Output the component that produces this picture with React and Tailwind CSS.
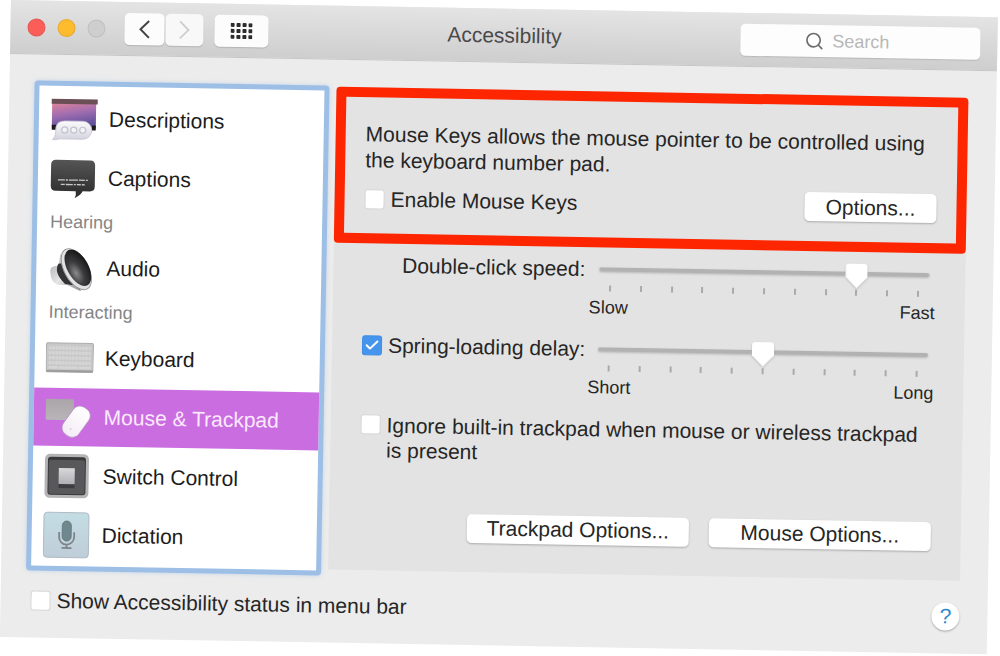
import React from "react";
import { Check, ChevronLeft, ChevronRight, Search } from "lucide-react";

function DescriptionsIcon() {
  return (
    <svg viewBox="0 0 48 48" className="size-12" aria-hidden="true">
      <defs>
        <linearGradient id="desc-sky" x1="0" y1="0" x2="0.3" y2="1">
          <stop offset="0" stopColor="#df8399" />
          <stop offset="0.5" stopColor="#a06db0" />
          <stop offset="1" stopColor="#5f519c" />
        </linearGradient>
        <linearGradient id="desc-bubble" x1="0" y1="0" x2="0" y2="1">
          <stop offset="0" stopColor="#fbfbfd" />
          <stop offset="1" stopColor="#d2d2de" />
        </linearGradient>
      </defs>
      <rect x="2" y="8" width="44" height="25" fill="url(#desc-sky)" />
      <rect x="1.500" y="4" width="46" height="5" fill="#6b4f57" />
      <path d="M2 30h5v5H2zM42 30h4v5h-4z" fill="#20181f" />
      <path
        d="M15 26h18a9 9 0 0 1 0 18H10q-3 1-7 1 3-3 3-8-1-11 9-11z"
        fill="url(#desc-bubble)"
        stroke="#c4c2d2"
        strokeWidth="0.800"
      />
      <g fill="#f2f2f7" stroke="#c3c2ce" strokeWidth="1.200">
        <circle cx="15" cy="35" r="3" />
        <circle cx="24" cy="35" r="3" />
        <circle cx="33" cy="35" r="3" />
      </g>
    </svg>
  );
}

function CaptionsIcon() {
  return (
    <svg viewBox="0 0 48 48" className="size-12" aria-hidden="true">
      <defs>
        <linearGradient id="cap-body" x1="0" y1="0" x2="0" y2="1">
          <stop offset="0" stopColor="#555555" />
          <stop offset="1" stopColor="#2a2a2a" />
        </linearGradient>
      </defs>
      <path
        d="M7 6h34q5 0 5 5v21q0 5-5 5h-7q-2 4-8 7 2-3 1-7H7q-5 0-5-5V11q0-5 5-5z"
        fill="url(#cap-body)"
      />
      <path d="M9 26h30" stroke="#c8c8c8" strokeWidth="1.300" strokeDasharray="7 1 2 1 9 1 6 1" />
      <path d="M12 30.500h24" stroke="#c8c8c8" strokeWidth="1.300" strokeDasharray="4 1 7 1 2 1" />
    </svg>
  );
}

function AudioIcon() {
  return (
    <svg viewBox="0 0 48 48" className="size-12" aria-hidden="true">
      <defs>
        <radialGradient id="audio-cone" cx="0.3" cy="0.6" r="0.7">
          <stop offset="0" stopColor="#8a8a8c" />
          <stop offset="0.45" stopColor="#3c3c3e" />
          <stop offset="1" stopColor="#171718" />
        </radialGradient>
        <linearGradient id="audio-metal" x1="0" y1="0" x2="1" y2="1">
          <stop offset="0" stopColor="#a5a5a8" />
          <stop offset="0.5" stopColor="#e6e6e8" />
          <stop offset="1" stopColor="#8a8a8d" />
        </linearGradient>
      </defs>
      <path d="M13 10 11 22q-8 0-8 5 0 12 8 14l9 0 14 6-8-22z" fill="url(#audio-metal)" />
      <path d="M11 20q-5 9 7 20l8 1-10-22z" fill="#333335" />
      <ellipse cx="29" cy="25" rx="12" ry="22.500" transform="rotate(-30 29 25)" fill="#e2e2e4" stroke="#929295" strokeWidth="0.900" />
      <ellipse cx="30.500" cy="23.500" rx="10.500" ry="20" transform="rotate(-30 30.500 23.500)" fill="url(#audio-cone)" />
    </svg>
  );
}

function KeyboardIcon() {
  return (
    <svg viewBox="0 0 48 48" className="size-12" aria-hidden="true">
      <rect x="0.500" y="9" width="47" height="29" rx="1.500" fill="#c8c8c8" stroke="#adadad" />
      <rect x="0.500" y="36" width="47" height="2" rx="1" fill="#9c9c9c" />
      <g stroke="#d5d5d5" strokeWidth="3.200">
        <path d="M3 14h42M3 19h42M3 24h42M3 29h42" strokeDasharray="2.800 0.500" />
        <path d="M3 33.500h9M13 33.500h19M33 33.500h12" strokeWidth="2.500" />
      </g>
    </svg>
  );
}

function MouseIcon() {
  return (
    <svg viewBox="0 0 48 48" className="size-12" aria-hidden="true">
      <defs>
        <linearGradient id="pad" x1="0" y1="0" x2="0" y2="1">
          <stop offset="0" stopColor="#a9a5a9" />
          <stop offset="1" stopColor="#b8b4b8" />
        </linearGradient>
        <linearGradient id="mouse-body" x1="0" y1="0" x2="0" y2="1">
          <stop offset="0" stopColor="#ffffff" />
          <stop offset="1" stopColor="#f4ebf6" />
        </linearGradient>
      </defs>
      <rect x="1" y="6" width="28" height="21" rx="1" fill="url(#pad)" />
      <rect x="22" y="12" width="19" height="33" rx="8" transform="rotate(35 31.500 28.500)" fill="url(#mouse-body)" stroke="#b88cc6" strokeWidth="0.800" />
      <circle cx="26" cy="36" r="0.900" fill="#d3c6d8" />
    </svg>
  );
}

function SwitchIcon() {
  return (
    <svg viewBox="0 0 48 48" className="size-12" aria-hidden="true">
      <defs>
        <linearGradient id="switch-key" x1="0" y1="0" x2="0" y2="1">
          <stop offset="0" stopColor="#d9d9dc" />
          <stop offset="1" stopColor="#b0b0b4" />
        </linearGradient>
      </defs>
      <rect x="1" y="2" width="44" height="44" rx="5" fill="#b5b5b5" />
      <rect x="4" y="5" width="38" height="38" rx="3" fill="#3a3a3c" />
      <rect x="5" y="8" width="36" height="34" rx="2" fill="#58585b" />
      <path d="M15 31h16v5H15z" fill="#3d3d40" />
      <rect x="15" y="16" width="16" height="16" fill="url(#switch-key)" />
    </svg>
  );
}

function DictationIcon() {
  return (
    <svg viewBox="0 0 48 48" className="size-12" aria-hidden="true">
      <defs>
        <linearGradient id="dict-bg" x1="0" y1="0" x2="0" y2="1">
          <stop offset="0" stopColor="#c4dde4" />
          <stop offset="1" stopColor="#bfcdd8" />
        </linearGradient>
      </defs>
      <rect x="1" y="1.500" width="45" height="45" rx="3.500" fill="url(#dict-bg)" stroke="#a9b6bf" strokeWidth="0.900" />
      <rect x="19.500" y="10" width="9" height="20" rx="4.500" fill="#6f888e" stroke="#5b7178" strokeWidth="0.800" />
      <path d="M16.500 21v5a7.500 7.500 0 0 0 15 0v-5M24 33.500v3M19 37h10" fill="none" stroke="#7d8489" strokeWidth="1.800" />
    </svg>
  );
}

function CheckBox({ defaultChecked, id }) {
  return (
    <span className="grid shrink-0 place-items-center">
      <input
        id={id}
        type="checkbox"
        defaultChecked={defaultChecked}
        className="peer col-start-1 row-start-1 size-5 appearance-none rounded-[3px] border border-[#d6d6d6] bg-white checked:border-[#3f8ee6] checked:bg-[#4595ec]"
      />
      <Check className="pointer-events-none col-start-1 row-start-1 hidden size-4 text-white peer-checked:block" strokeWidth={3} />
    </span>
  );
}

function PushButton({ children, className }) {
  return (
    <button
      type="button"
      className={"h-[29px] rounded-[5px] bg-white text-center leading-[28px] shadow-[0_1px_2px_rgba(0,0,0,0.25)] " + className}
    >
      {children}
    </button>
  );
}

function TickSlider({ id, value, from, to }) {
  return (
    <div className="min-w-0">
      <div className="flex h-7 items-center">
        <input
          id={id}
          type="range"
          min="0"
          max="10"
          defaultValue={value}
          className="h-7 w-full appearance-none bg-transparent drop-shadow-[0_1px_1px_rgba(0,0,0,0.2)] [&::-webkit-slider-runnable-track]:h-1 [&::-webkit-slider-runnable-track]:rounded-full [&::-webkit-slider-runnable-track]:bg-[#b2b2b2] [&::-webkit-slider-thumb]:-mt-2 [&::-webkit-slider-thumb]:h-[25px] [&::-webkit-slider-thumb]:w-[22px] [&::-webkit-slider-thumb]:appearance-none [&::-webkit-slider-thumb]:rounded-[3px] [&::-webkit-slider-thumb]:bg-white [&::-webkit-slider-thumb]:[clip-path:polygon(0_0,100%_0,100%_55%,50%_100%,0_55%)]"
        />
      </div>
      <div className="mt-0.5 flex justify-between px-[10px]" aria-hidden="true">
        {Array.from({ length: 11 }, (_, i) => (
          <span key={i} className="h-1.5 w-0.5 bg-[#aaaaaa]" />
        ))}
      </div>
      <div className="-mr-1.5 -ml-2.5 mt-1 flex justify-between text-lg leading-6">
        <span>{from}</span>
        <span>{to}</span>
      </div>
    </div>
  );
}

function NavItem({ icon, label, selected }) {
  return (
    <button
      type="button"
      aria-current={selected ? "page" : undefined}
      className={
        "flex h-[58px] w-full items-center gap-[11px] pl-[11px] text-left " +
        (selected ? "bg-[#ca6de0] text-[#fbe9ff]" : "text-[#1c1c1c]")
      }
    >
      {icon}
      <span>{label}</span>
    </button>
  );
}

function NavHeading({ children }) {
  return <h2 className="h-[30px] pl-[13px] text-lg leading-[28px] text-[#858585]">{children}</h2>;
}

export default function App() {
  return (
    <div className="min-h-screen overflow-hidden bg-white pr-0.5 pl-[11px] font-['Liberation_Sans',Arial,sans-serif] text-[21px] text-[#262626]">
      <div className="origin-top-left rotate-1 bg-[#ececec]">
        <header className="flex h-[54px] items-center border-b border-[#c6c6c6] bg-linear-to-b from-[#e5e4e5] to-[#cfcecf] pr-[17px] pl-[17px]">
          <div className="flex gap-3">
            <button type="button" aria-label="Close" className="size-[18px] rounded-full border border-[#e2574f] bg-[#fb5e59]" />
            <button type="button" aria-label="Minimize" className="size-[18px] rounded-full border border-[#e5a92f] bg-[#fdbc2e]" />
            <button type="button" aria-label="Zoom" className="size-[18px] rounded-full border border-[#c0bfc0] bg-[#cfcecf]" />
          </div>
          <div className="ml-[19px] flex gap-px">
            <button type="button" aria-label="Back" className="flex h-8 w-10 items-center justify-center rounded-[5px] bg-[#fcfcfc] text-[#444444] shadow-[0_1px_1px_rgba(0,0,0,0.15)]">
              <svg viewBox="0 0 12 20" className="h-5 w-3" fill="none" stroke="currentColor" strokeWidth="2" aria-hidden="true">
                <path d="M10.500 1.500 2 10l8.500 8.500" />
              </svg>
            </button>
            <button type="button" aria-label="Forward" className="flex h-8 w-[38px] items-center justify-center rounded-[5px] bg-[#f8f8f8] text-[#cccccc] shadow-[0_1px_1px_rgba(0,0,0,0.15)]">
              <svg viewBox="0 0 12 20" className="h-5 w-3" fill="none" stroke="currentColor" strokeWidth="1.700" aria-hidden="true">
                <path d="M1.500 1.500 10 10l-8.500 8.500" />
              </svg>
            </button>
          </div>
          <button type="button" aria-label="Show all" className="ml-[11px] flex h-8 w-[54px] items-center justify-center rounded-[5px] bg-[#fcfcfc] shadow-[0_1px_1px_rgba(0,0,0,0.15)]">
            <svg viewBox="0 0 22 16" className="h-4 w-[22px]" aria-hidden="true">
              {[0, 6, 12, 18].map((x) =>
                [0, 6, 12].map((y) => <rect key={x + "-" + y} x={x} y={y} width="4" height="4" rx="0.800" fill="#2c2c2c" />)
              )}
            </svg>
          </button>
          <h1 className="flex-1 text-center text-[#4a4a4a]">Accessibility</h1>
          <label className="flex h-8 w-60 items-center gap-2 rounded-[5px] bg-[#fdfdfd] pl-16 shadow-[0_1px_1px_rgba(0,0,0,0.12)]">
            <Search className="size-5 shrink-0 text-[#6c6c6c]" strokeWidth={2} />
            <input
              type="text"
              aria-label="Search"
              placeholder="Search"
              className="w-full min-w-0 bg-transparent text-lg outline-none placeholder:text-[#b8b8b8]"
            />
          </label>
        </header>

        <main className="flex items-start gap-[7px] pt-[26px] pr-7 pl-[25px]">
          <nav className="flex w-[295px] shrink-0 flex-col gap-px rounded-[4px] border-5 border-[#9dbfe6] bg-white pt-1 pb-0.5 shadow-[0_0_4px_rgba(157,191,230,0.5)]">
            <NavItem icon={<DescriptionsIcon />} label="Descriptions" />
            <NavItem icon={<CaptionsIcon />} label="Captions" />
            <NavHeading>Hearing</NavHeading>
            <NavItem icon={<AudioIcon />} label="Audio" />
            <NavHeading>Interacting</NavHeading>
            <NavItem icon={<KeyboardIcon />} label="Keyboard" />
            <NavItem icon={<MouseIcon />} label="Mouse & Trackpad" selected />
            <NavItem icon={<SwitchIcon />} label="Switch Control" />
            <NavItem icon={<DictationIcon />} label="Dictation" />
          </nav>

          <div className="mt-px min-w-0 flex-1 bg-[#e3e3e3]">
            <section className="rounded-[4px] border-10 border-[#fd2600] pt-6 pr-5 pb-[18px] pl-5">
              <p className="leading-[26px]">
                Mouse Keys allows the mouse pointer to be controlled using the keyboard number pad.
              </p>
              <div className="mt-2.5 flex items-center justify-between">
                <label className="flex items-center gap-1.5">
                  <CheckBox id="mouse-keys" />
                  Enable Mouse Keys
                </label>
                <PushButton className="w-[132px]">Options...</PushButton>
              </div>
            </section>

            <div className="flex flex-col pt-2 pr-[30px] pb-[29px] pl-[30px]">
              <div className="grid grid-cols-[226px_1fr] gap-x-[10px] gap-y-4 pr-[6px]">
                <label htmlFor="double-click" className="justify-self-end pr-1 leading-7 whitespace-nowrap">
                  Double-click speed:
                </label>
                <TickSlider id="double-click" value="8" from="Slow" to="Fast" />
                <label className="flex h-7 items-center gap-1.5 whitespace-nowrap">
                  <CheckBox id="spring-loading" defaultChecked />
                  Spring-loading delay:
                </label>
                <TickSlider id="spring-delay" value="5" from="Short" to="Long" />
              </div>
              <label className="mt-[17px] flex items-start gap-1.5 leading-[25px]">
                <span className="flex h-[25px] items-center">
                  <CheckBox id="ignore-trackpad" />
                </span>
                <span>Ignore built-in trackpad when mouse or wireless trackpad is present</span>
              </label>
              <div className="mt-[50px] flex justify-end gap-5">
                <PushButton className="w-[222px]">Trackpad Options...</PushButton>
                <PushButton className="w-[222px]">Mouse Options...</PushButton>
              </div>
            </div>
          </div>
        </main>

        <footer className="flex items-center justify-between pt-4 pr-7 pb-[23px] pl-[30px]">
          <label className="flex items-center gap-1.5 leading-7">
            <CheckBox id="menu-status" />
            Show Accessibility status in menu bar
          </label>
          <button type="button" aria-label="Help" className="size-7 rounded-full bg-white text-center leading-7 text-[#2f86cf] shadow-[0_1px_2px_rgba(0,0,0,0.3)]">
            ?
          </button>
        </footer>
      </div>
    </div>
  );
}
